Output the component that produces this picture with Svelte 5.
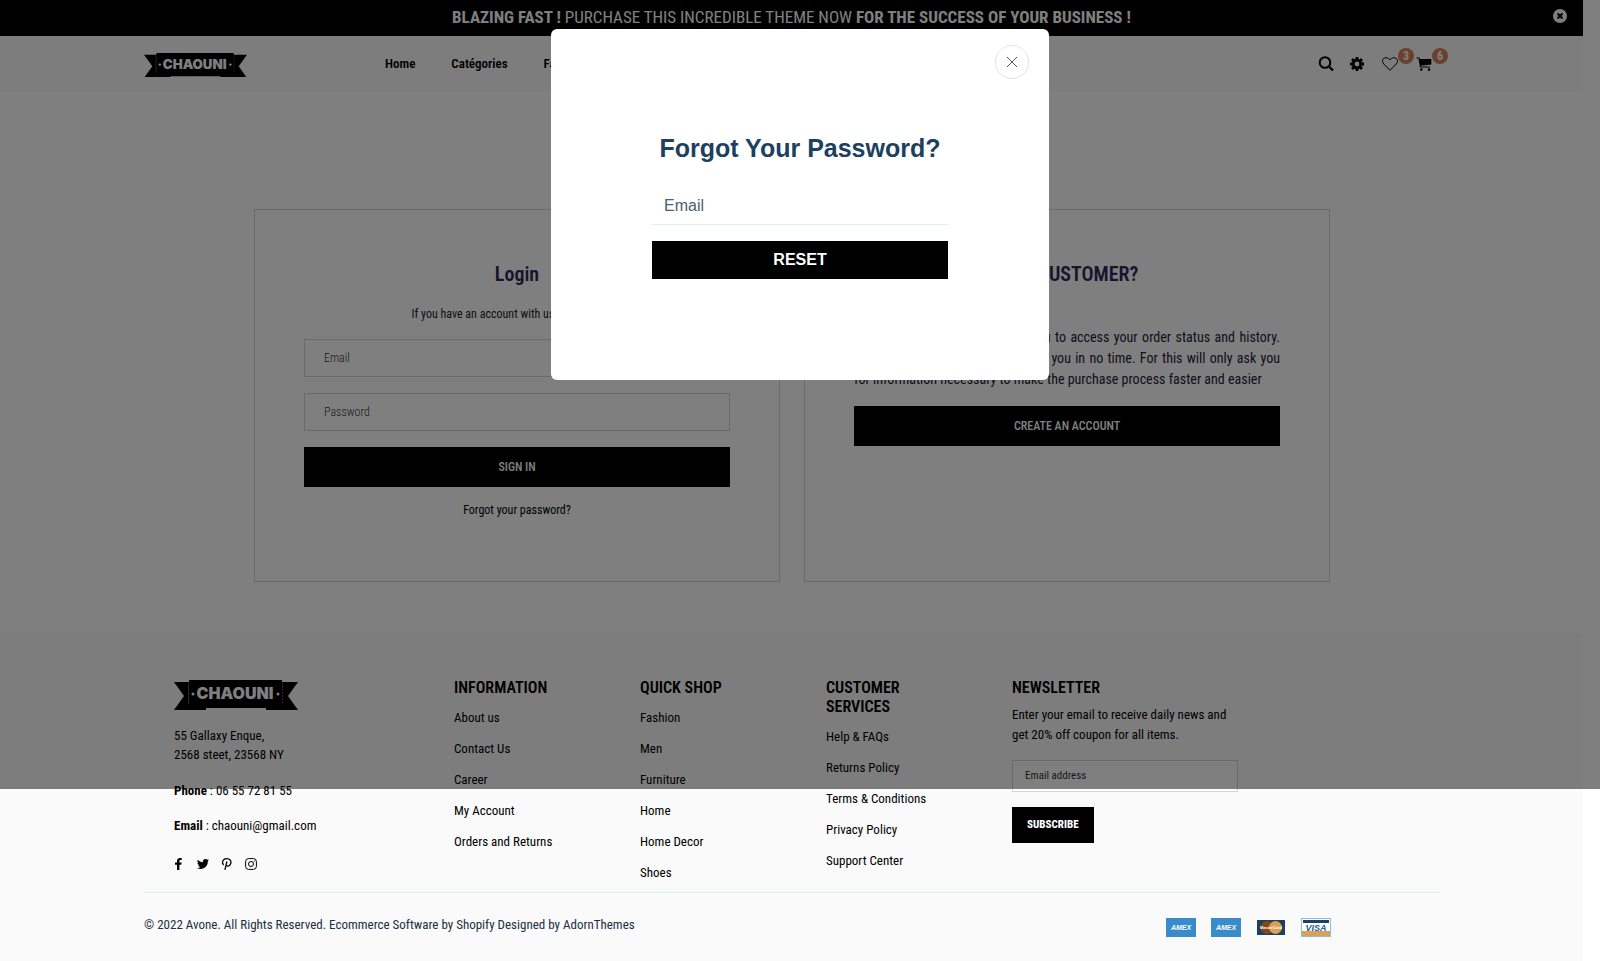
<script>
  const nav = ['Home', 'Catégories', 'Fashion'];
  const columns = [
    { title: 'INFORMATION', links: ['About us', 'Contact Us', 'Career', 'My Account', 'Orders and Returns'] },
    { title: 'QUICK SHOP', links: ['Fashion', 'Men', 'Furniture', 'Home', 'Home Decor', 'Shoes'] },
    { title: 'CUSTOMER SERVICES', links: ['Help & FAQs', 'Returns Policy', 'Terms & Conditions', 'Privacy Policy', 'Support Center'] }
  ];
</script>

{#snippet logo()}
  <svg class="logo" viewBox="0 0 124 30" role="img" aria-label="Chaouni">
    <path d="M0 2H15V0H108V2H124L114 16L124 30H92V28H32V30H0L10 16Z" fill="#000" />
    <path d="M14.500 3V24" stroke="#70404c" />
    <path d="M108.500 3V24" stroke="#70404c" stroke-dasharray="2 1" />
    <circle cx="19" cy="14" r="1.500" fill="#fff" />
    <circle cx="104" cy="14" r="1.500" fill="#fff" />
    <text x="61" y="19" text-anchor="middle" fill="#fff">CHAOUNI</text>
  </svg>
{/snippet}

<div class="page">
  <div class="banner">
    <p><b>BLAZING FAST !</b> PURCHASE THIS INCREDIBLE THEME NOW <b>FOR THE SUCCESS OF YOUR BUSINESS !</b></p>
    <button class="bare dismiss" aria-label="Dismiss">
      <svg width="14" height="14" viewBox="0 0 14 14"><circle cx="7" cy="7" r="7" fill="#fff" /><path d="M4.500 4.500L9.500 9.500M9.500 4.500L4.500 9.500" stroke="#000" stroke-width="2" /></svg>
    </button>
  </div>

  <header>
    <a class="brand" href="#home">{@render logo()}</a>
    <nav>{#each nav as item}<a href="#{item}">{item}</a>{/each}</nav>
    <div class="tools">
      <button class="bare" aria-label="Search">
        <svg width="16" height="16" viewBox="0 0 16 16" fill="none" stroke="#000"><circle cx="7" cy="6.500" r="5.300" stroke-width="2" /><path d="M11 10.500L15 14.500" stroke-width="2.400" /></svg>
      </button>
      <button class="bare" aria-label="Settings">
        <svg width="14" height="14" viewBox="0 0 14 14"><circle cx="7" cy="7" r="3.800" fill="none" stroke="#000" stroke-width="2.800" /><path d="M7 0V3M7 11V14M0 7H3M11 7H14M2 2L4 4M10 10L12 12M12 2L10 4M2 12L4 10" stroke="#000" stroke-width="2.800" /></svg>
      </button>
      <button class="bare counted" aria-label="Wishlist">
        <svg width="16" height="14" viewBox="0 0 16 14"><path d="M8 13.300L1.800 7.100C-1 4 1 .7 4.200 .7C6 .7 7.300 1.700 8 3C8.700 1.700 10 .7 11.800 .7C15 .7 17 4 14.200 7.100Z" fill="none" stroke="#000" /></svg>
        <span class="badge">3</span>
      </button>
      <button class="bare counted" aria-label="Cart">
        <svg width="16" height="14" viewBox="0 0 16 14"><path d="M.5 1H3L4.500 10H14" fill="none" stroke="#000" stroke-width="1.200" /><path d="M3.200 2H15.300V7.500L4.300 8.700Z" /><circle cx="5.300" cy="12.600" r="1.300" /><circle cx="13" cy="12.600" r="1.300" /></svg>
        <span class="badge">6</span>
      </button>
    </div>
  </header>

  <main>
    <section class="card">
      <h2>Login</h2>
      <p class="intro">If you have an account with us, please log in.</p>
      <form>
        <input type="email" placeholder="Email" aria-label="Email" />
        <input type="password" placeholder="Password" aria-label="Password" />
        <button type="button" class="solid">SIGN IN</button>
      </form>
      <a class="forgot" href="#forgot">Forgot your password?</a>
    </section>
    <section class="card">
      <h2>NEW CUSTOMER?</h2>
      <p class="about">Registering for this site allows you to access your order status and history. We'll get a new account set up for you in no time. For this will only ask you for information necessary to make the purchase process faster and easier</p>
      <button type="button" class="solid">CREATE AN ACCOUNT</button>
    </section>
  </main>

  <footer>
    <div class="columns">
      <div class="contact">
        {@render logo()}
        <address>55 Gallaxy Enque,<br />2568 steet, 23568 NY</address>
        <p><b>Phone</b> : 06 55 72 81 55</p>
        <p><b>Email</b> : chaouni@gmail.com</p>
        <div class="social">
          <a href="#facebook" aria-label="Facebook"><svg viewBox="0 0 12 12"><path d="M3 12V6.700H1V4.600H3V3C3 1 4.200 0 6 0H7.700V2H6.500C5.700 2 5.400 2.400 5.400 3V4.600H7.600L7.300 6.700H5.400V12Z" /></svg></a>
          <a href="#twitter" aria-label="Twitter"><svg viewBox="1 0 12 12"><path d="M12 2.500L10.800 3.600C10.900 7.800 7.500 11 3.800 11C2.400 11 1.100 10.600 0 9.900C1.300 10 2.500 9.700 3.500 8.900C2.400 8.800 1.600 8.200 1.300 7.200H2.300C1.200 6.900 .4 6 .4 4.800L1.500 5.100C.4 4.300 .1 3 .8 1.800C2.100 3.300 3.800 4.200 5.900 4.300C5.500 2.500 6.700 1 8.400 1C9.100 1 9.700 1.300 10.200 1.800L11.700 1.200L10.700 2.700Z" /></svg></a>
          <a href="#pinterest" aria-label="Pinterest"><svg viewBox="1 0 12 12"><path d="M2.600 7C0 4 2.200 .7 5.800 .7C8.800 .7 10.400 2.700 9.900 5C9.300 8 6.300 8.900 5 7.200M5.900 3.500L3.900 11.800" fill="none" stroke="#000" stroke-width="1.300" /></svg></a>
          <a href="#instagram" aria-label="Instagram"><svg viewBox="1 0 12 12" fill="none" stroke="#000"><rect x=".6" y=".6" width="10.800" height="10.800" rx="3" /><circle cx="6" cy="6" r="2.500" /><path d="M8.800 3.200H9.800" /></svg></a>
        </div>
      </div>
      {#each columns as column}
        <div>
          <h3>{column.title}</h3>
          <ul>{#each column.links as link}<li><a href="#{link}">{link}</a></li>{/each}</ul>
        </div>
      {/each}
      <div class="newsletter">
        <h3>NEWSLETTER</h3>
        <p>Enter your email to receive daily news and get 20% off coupon for all items.</p>
        <input type="email" placeholder="Email address" aria-label="Email address" />
        <button type="button">SUBSCRIBE</button>
      </div>
    </div>
    <div class="legal">
      <p>© 2022 Avone. All Rights Reserved. Ecommerce Software by Shopify Designed by AdornThemes</p>
      <div class="cards">
        {#each [1, 2] as n}
          <svg width="30" height="19" viewBox="0 0 30 19" role="img" aria-label="American Express"><rect width="30" height="19" fill="#3a8bc9" /><text x="15" y="12" text-anchor="middle" class="amex">AMEX</text></svg>
        {/each}
        <svg width="30" height="19" viewBox="0 0 30 19" role="img" aria-label="MasterCard"><rect x="1" y="2" width="28" height="15" fill="#1d4060" /><circle cx="11" cy="9.500" r="6.500" fill="#804a18" /><circle cx="19.500" cy="9.500" r="6.500" fill="#dba057" /><text x="15" y="11" text-anchor="middle" class="mc">MasterCard</text></svg>
        <svg width="30" height="19" viewBox="0 0 30 19" role="img" aria-label="Visa"><rect x=".5" y=".5" width="29" height="18" fill="#fff" stroke="#86bfe6" /><rect x="2" y="2" width="26" height="3" fill="#1d4060" /><rect x="1" y="13" width="28" height="5" fill="#dba057" /><text x="15" y="13" text-anchor="middle" class="visa">VISA</text></svg>
      </div>
    </div>
  </footer>

  <div class="overlay">
    <div class="modal" role="dialog" aria-modal="true" aria-labelledby="reset-title">
      <button class="close" aria-label="Close">
        <svg width="12" height="12" viewBox="0 0 12 12"><path d="M1 1L11 11M11 1L1 11" stroke="#555" /></svg>
      </button>
      <h1 id="reset-title">Forgot Your Password?</h1>
      <input type="email" placeholder="Email" aria-label="Email" />
      <button type="button" class="reset">RESET</button>
    </div>
  </div>
</div>

<style>
  :global(body) { margin: 0; background: #fff; }
  .page, .page :global(*) { box-sizing: border-box; }
  .page {
    position: relative;
    padding-right: 17px;
    font-family: "Roboto Condensed", "Liberation Sans Narrow", Roboto, sans-serif;
    font-size: 13px;
    color: #000;
  }
  h1, h2, h3, p, ul { margin: 0; padding: 0; }
  ul { list-style: none; }
  a { color: inherit; text-decoration: none; }
  button, input { font-family: inherit; border-radius: 0; }
  svg { display: block; }
  .bare { border: 0; padding: 0; background: none; color: inherit; }

  .banner {
    position: relative;
    padding-bottom: 2px;
    background: #000;
    color: #fff;
    font-size: 17px;
    line-height: 34px;
    text-align: center;
  }
  .dismiss { position: absolute; right: 16px; top: 9px; }

  header {
    display: flex;
    align-items: center;
    height: 56px;
    padding: 0 151px 0 144px;
    background: #fafafa;
  }
  .brand { width: 103px; padding-top: 2px; }
  .logo { width: 100%; }
  .logo text { font: 900 16px Inter, "Liberation Sans", sans-serif; }
  nav { display: flex; flex: 1; gap: 36px; margin-left: 138px; padding-bottom: 2px; font-weight: 600; }
  .tools { display: flex; align-items: center; gap: 16px; }
  .counted { position: relative; }
  .counted:nth-child(3) { margin-left: 2px; }
  .counted + .counted { margin-left: 2px; }
  .badge {
    position: absolute;
    left: 16px;
    top: -9px;
    width: 16px;
    height: 16px;
    border-radius: 50%;
    background: #d5805c;
    color: #fff;
    font-size: 12px;
    font-weight: 700;
    line-height: 16px;
    text-align: center;
  }

  main {
    display: grid;
    grid-template-columns: 1fr 1fr;
    gap: 24px;
    padding: 117px 253px 52px 254px;
  }
  .card {
    display: flex;
    flex-direction: column;
    min-height: 373px;
    padding: 50px 49px;
    border: 1px solid #d5d5d5;
    text-align: center;
  }
  h2 { font-size: 20px; line-height: 28px; color: #2d2a5c; font-weight: 600; }
  .intro { margin-top: 16px; font-size: 12px; line-height: 20px; color: #222; }
  form { display: flex; flex-direction: column; gap: 16px; margin-top: 15px; }
  form input {
    height: 38px;
    padding: 0 19px;
    border: 1px solid #d5d5d5;
    background: #fff;
    font-size: 12px;
    font-weight: 300;
  }
  input::placeholder { color: #333; opacity: 1; }
  .solid { height: 40px; border: 0; background: #000; color: #fff; font-size: 12px; font-weight: 500; }
  .forgot { margin-top: 13px; font-size: 12px; line-height: 20px; }
  .about { margin: 39px 0 16px; font-size: 14px; line-height: 21px; text-align: justify; color: #1d2038; }

  footer { padding: 44px 143px 26px 144px; background: #fafafa; }
  .columns {
    display: grid;
    grid-template-columns: 280px 186px 186px 186px 1fr;
    padding: 0 30px;
    min-height: 214px;
  }
  .contact { padding-top: 2px; }
  .contact .logo { width: 124px; }
  address { margin: 16px 0 17px; font-style: normal; line-height: 19px; }
  .contact p + p { margin-top: 16px; }
  .contact p { line-height: 19px; }
  .social { display: flex; gap: 12px; margin-top: 23px; }
  .social svg { width: 12px; height: 12px; overflow: visible; }
  h3 { max-width: 126px; font-size: 16px; line-height: 19px; padding-bottom: 5px; font-weight: 600; }
  li { padding: 6px 0; line-height: 19px; }
  .newsletter { display: flex; flex-direction: column; align-items: flex-start; }
  .newsletter p { max-width: 226px; line-height: 20px; padding: 3px 0 15px; }
  .newsletter input {
    width: 226px;
    height: 32px;
    padding: 0 12px 2px;
    border: 1px solid #d5d5d5;
    background: #fff;
    font-size: 11px;
  }
  .newsletter button {
    height: 36px;
    margin-top: 15px;
    padding: 0 15px 2px;
    border: 0;
    background: #000;
    color: #fff;
    font-size: 11px;
    font-weight: 800;
  }
  .legal {
    display: flex;
    align-items: flex-start;
    justify-content: space-between;
    padding: 22px 109px 0 0;
    border-top: 1px solid #e1eeea;
    color: #1d2f40;
    line-height: 20px;
  }
  .cards { display: flex; gap: 15px; padding-top: 3px; }
  .amex { font: italic 700 7px "Liberation Sans", sans-serif; fill: #fff; }
  .mc { font: 700 4px "Liberation Sans", sans-serif; fill: #fff; }
  .visa { font: italic 700 9px "Liberation Sans", sans-serif; fill: #1d5c94; }

  .overlay {
    position: absolute;
    inset: 0 0 auto;
    height: 789px;
    padding-top: 29px;
    background: rgba(0, 0, 0, 0.5);
    font-family: "Liberation Sans", Arial, sans-serif;
  }
  .modal {
    position: relative;
    display: flex;
    flex-direction: column;
    width: 498px;
    margin: 0 auto;
    padding: 101px 101px 101px;
    border-radius: 6px;
    background: #fff;
  }
  .close {
    position: absolute;
    right: 20px;
    top: 16px;
    display: grid;
    place-items: center;
    width: 34px;
    height: 34px;
    padding: 0;
    border: 1px solid #dce6e4;
    border-radius: 50%;
    background: #fff;
  }
  h1 { font-size: 25px; line-height: 36px; text-align: center; color: #1d3f60; white-space: nowrap; }
  .modal input {
    height: 40px;
    margin: 19px 0 16px;
    padding: 2px 12px 0;
    border: 0;
    border-bottom: 1px solid #e1eeea;
    font-size: 16px;
  }
  .modal input::placeholder { color: #4c5f6c; }
  .reset { height: 38px; border: 0; background: #000; color: #fff; font-size: 16px; font-weight: 700; }
</style>
